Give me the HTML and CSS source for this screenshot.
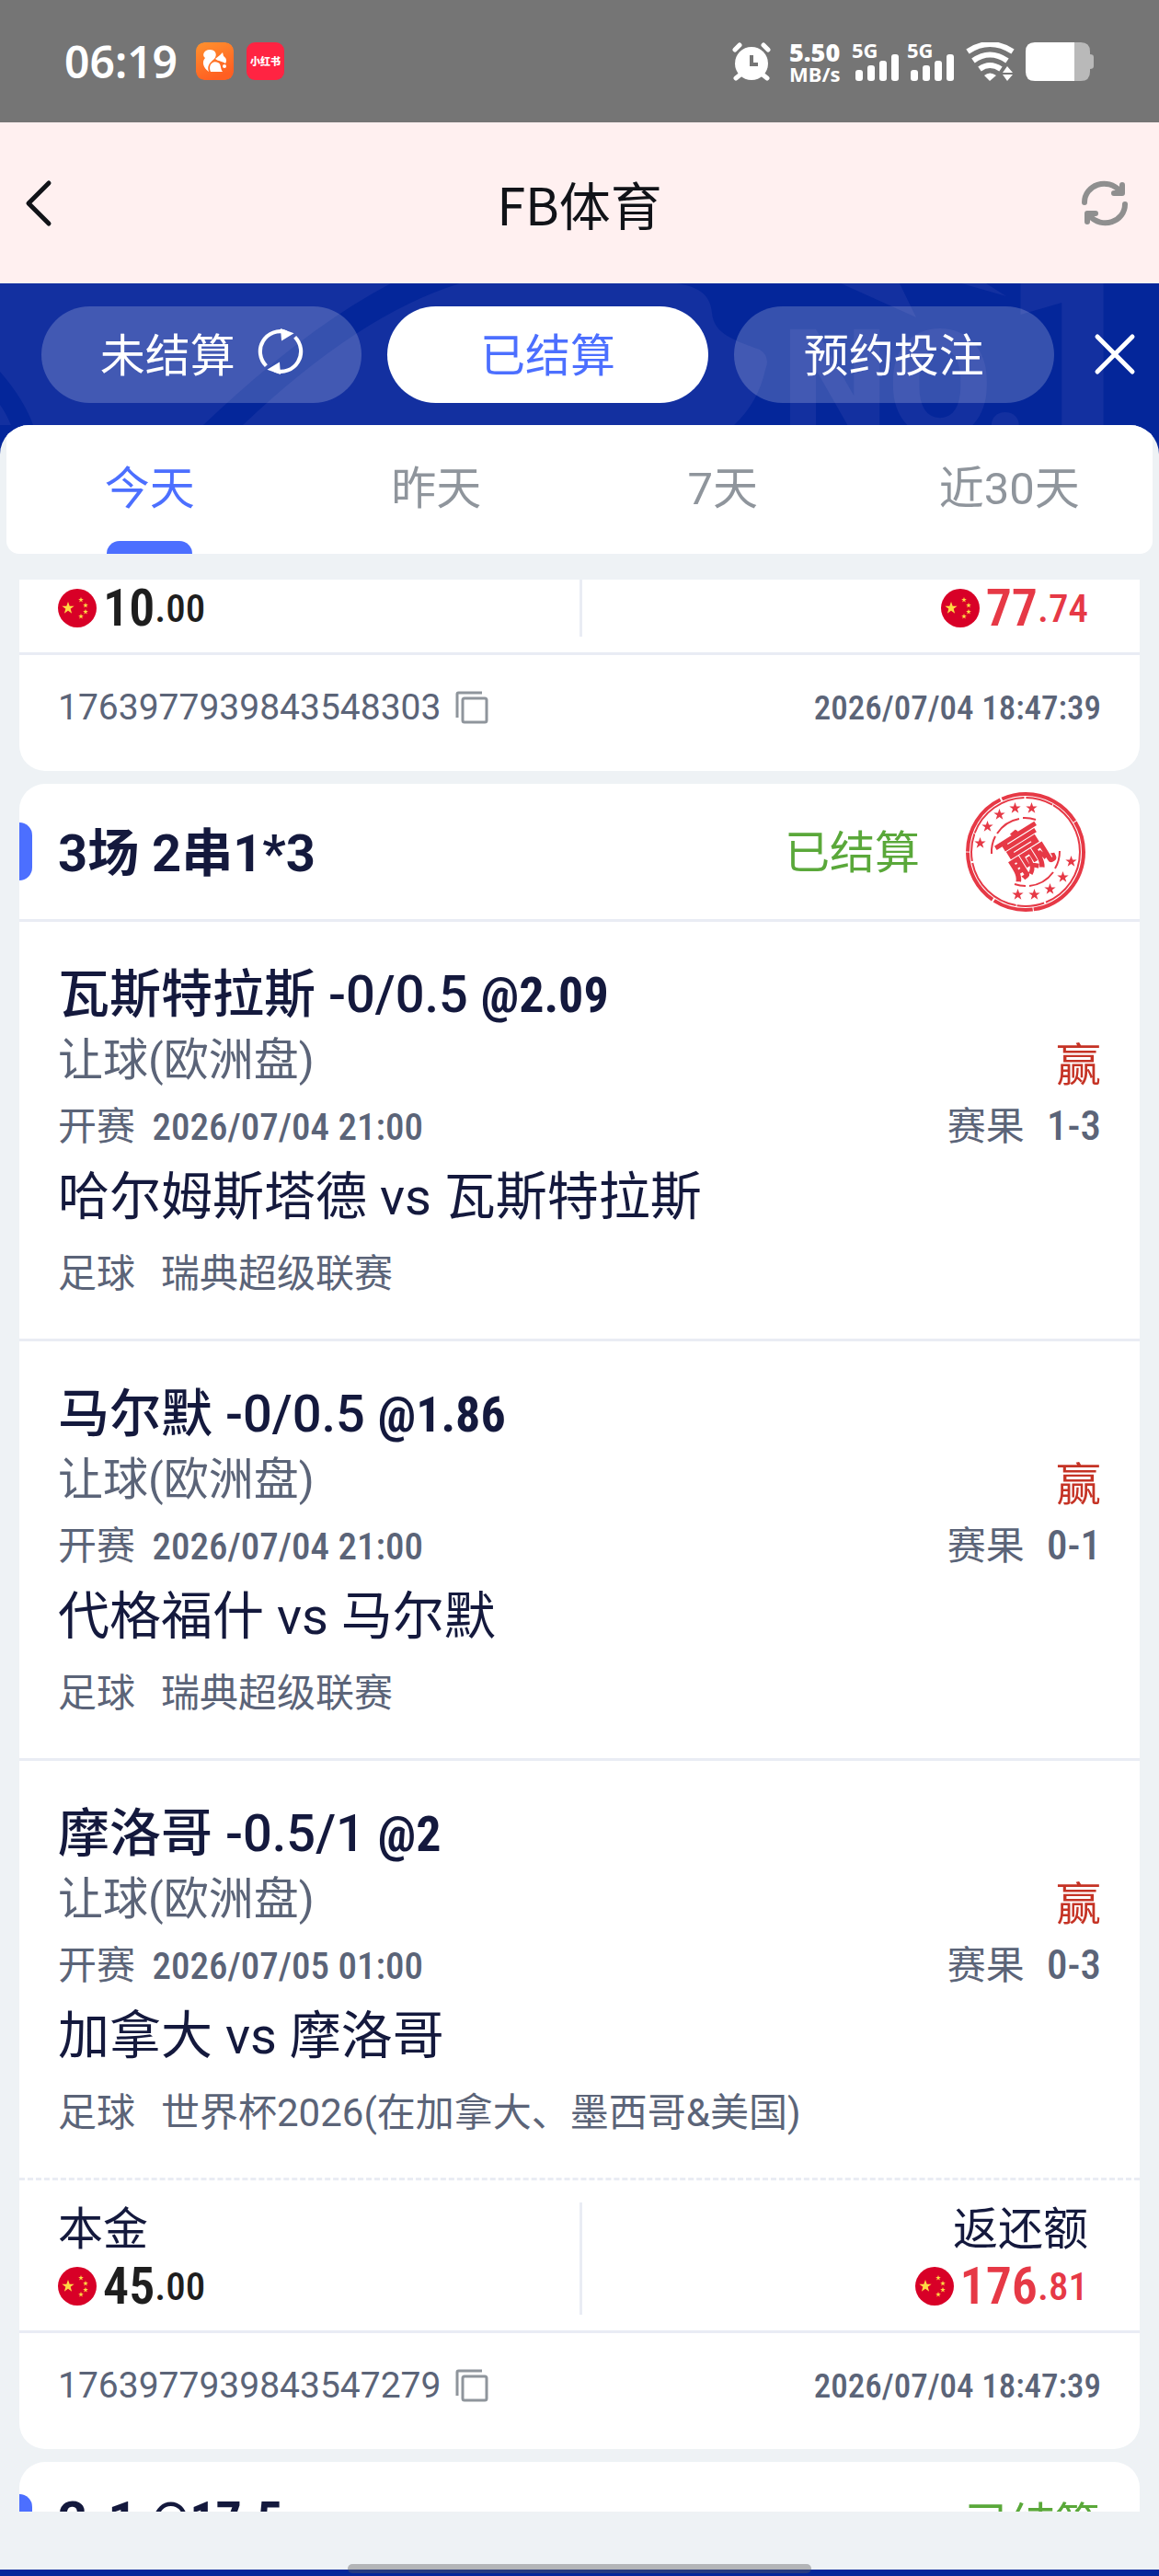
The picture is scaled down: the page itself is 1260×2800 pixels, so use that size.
FILE: index.html
```
<!DOCTYPE html>
<html lang="zh-CN">
<head>
  <meta charset="UTF-8">
  <title>FB体育</title>
  <meta name="viewport" content="width=device-width, initial-scale=1.0">
  <link rel="stylesheet" href="styles.css">
</head>
<body>
  <!-- shared shapes -->
  <svg class="defs" width="0" height="0">
    <symbol id="star" viewBox="-10 -10 20 20">
      <path d="M0-10 2.4-3.2 9.5-3.1 3.8 1.2 5.9 8.1 0 4-5.9 8.1-3.8 1.2-9.5-3.1-2.4-3.2Z"/>
    </symbol>
    <symbol id="flag" viewBox="0 0 42 42">
      <circle cx="21" cy="21" r="21" fill="#d80027"/>
      <g fill="#ffda44">
        <use href="#star" x="4" y="14" width="14" height="14"/>
        <use href="#star" x="22" y="9" width="6" height="6"/>
        <use href="#star" x="27" y="15" width="6" height="6"/>
        <use href="#star" x="27" y="22" width="6" height="6"/>
        <use href="#star" x="22" y="27" width="6" height="6"/>
      </g>
    </symbol>
    <symbol id="copy" viewBox="0 0 36 36">
      <path d="M2 29V3.500Q2 2 3.500 2H29" fill="none" stroke="#8f959c" stroke-width="3"/>
      <rect x="8" y="8" width="26" height="26" rx="2" fill="none" stroke="#8f959c" stroke-width="3"/>
    </symbol>
    <symbol id="signal" viewBox="0 0 48 42">
      <rect x="0" y="30" width="8" height="12" rx="3"/>
      <rect x="13" y="25" width="8" height="17" rx="3"/>
      <rect x="26" y="20" width="8" height="22" rx="3"/>
      <rect x="39" y="13" width="8" height="29" rx="3"/>
    </symbol>
  </svg>

  <div class="status-bar">
    <div class="status-left">
      <span class="clock">06:19</span>
      <svg class="app-icon" viewBox="0 0 41 41">
        <defs>
          <linearGradient id="uc" x1="0" y1="0" x2="0.400" y2="1">
            <stop offset="0" stop-color="#ff922e"/>
            <stop offset="1" stop-color="#ff5f22"/>
          </linearGradient>
        </defs>
        <rect width="41" height="41" rx="9" fill="url(#uc)"/>
        <path d="M14 32C8 28 6 21 10 17 6 14 9 8 15 8 21 8 24 13 20 18 14 23 12 26 14 32Z" fill="#fff"/>
        <path d="M21 18 26 14 29 11 30 15C33 17 34 20 32 23 28 20 25 21 21 18Z" fill="#fff"/>
        <path d="M16 32C13 25 18 19 24 22 28 24 26 28 29 32Z" fill="#fff"/>
        <circle cx="31" cy="26" r="2" fill="#fff"/>
      </svg>
      <span class="app-icon app-red">小红书</span>
    </div>
    <div class="status-right">
      <svg width="42" height="42" viewBox="0 0 42 42">
        <g stroke="#fff" stroke-width="5" stroke-linecap="round">
          <path d="M3 8 8 3M39 8 34 3M9 35 4 39M33 35 38 39"/>
        </g>
        <circle cx="21" cy="23" r="18" fill="#fff"/>
        <path d="M21 14V24H28" fill="none" stroke="#757575" stroke-width="4"/>
      </svg>
      <div class="speed"><b>5.50</b><span>MB/s</span></div>
      <div class="cell"><span>5G</span><svg width="48" height="42"><use href="#signal" fill="#fff"/></svg></div>
      <div class="cell"><span>5G</span><svg width="48" height="42"><use href="#signal" fill="#fff"/></svg></div>
      <svg width="53" height="42" viewBox="0 0 53 42">
        <g fill="none" stroke="#fff" stroke-width="6">
          <path d="M2 10Q26-6 51 10"/>
          <path d="M8 20Q26 7 45 20"/>
          <path d="M15 29Q26 21 38 29"/>
        </g>
        <path d="M20 36Q26 31 33 36L26 42Z" fill="#fff"/>
        <path d="M40 33 45 26 51 33ZM40 35 45 42 51 35Z" fill="#fff"/>
      </svg>
      <svg width="75" height="42" viewBox="0 0 75 42">
        <path d="M52 0H60Q70 0 70 10V13Q74 13 74 16V26Q74 29 70 29V32Q70 42 60 42H52Z" fill="#b9b9b9"/>
        <path d="M53 0H10Q0 0 0 10V32Q0 42 10 42H53Z" fill="#fff"/>
      </svg>
    </div>
  </div>

  <header class="top">
    <button class="icon-btn" aria-label="返回">
      <svg width="32" height="52" viewBox="0 0 32 52" fill="none" stroke="#111318" stroke-width="5" stroke-linecap="round" stroke-linejoin="round"><path d="M27 4 5 26 27 48"/></svg>
    </button>
    <h1>FB体育</h1>
    <button class="icon-btn refresh" aria-label="刷新">
      <svg width="50" height="50" viewBox="0 0 50 50" fill="none" stroke="#8f8f8f" stroke-width="6" stroke-linecap="round" stroke-linejoin="round">
        <path d="M3 24C3 5 28-4 42 12M44 5V14H35"/>
        <path d="M47 26C47 45 22 54 8 38M6 45V36H15"/>
      </svg>
    </button>
  </header>

  <nav class="nav">
    <svg class="nav-bg" viewBox="0 0 1260 154" preserveAspectRatio="xMaxYMin slice">
      <g fill="#1330a0">
        <path d="M0 0H736C760 4 772 12 774 32 776 56 800 62 826 72Q838 80 832 94 824 130 798 154H0Z"/>
        <path d="M914 0H978L996 37ZM1045 0H1072L1094 14Z"/>
        <text class="nav-no" x="850" y="166">NO.</text>
        <text class="nav-one" x="1087" y="166">1</text>
      </g>
      <path d="M425 0H500Q390 34 264 154H221Q330 50 425 0ZM0 96Q26 126 36 154H12Q6 140 0 132Z" fill="#04269a"/>
    </svg>
    <div class="pills">
      <button class="pill">未结算
        <svg width="50" height="50" viewBox="0 0 48 48" fill="none" stroke="#fff" stroke-width="4">
          <path d="M9 39A21 21 0 0 1 30 4M39 9A21 21 0 0 1 18 44"/>
          <path d="M24 0 38 5 25 13ZM24 48 10 43 23 35Z" fill="#fff" stroke="none"/>
        </svg>
      </button>
      <button class="pill active">已结算</button>
      <button class="pill">预约投注</button>
    </div>
    <button class="icon-btn close" aria-label="关闭">
      <svg width="48" height="48" viewBox="0 0 48 48" stroke="#fff" stroke-width="5" stroke-linecap="round"><path d="M5 5 43 43M43 5 5 43"/></svg>
    </button>
  </nav>

  <main class="panel">
    <div class="tabs">
      <button class="tab active">今天</button>
      <button class="tab">昨天</button>
      <button class="tab">7天</button>
      <button class="tab">近30天</button>
    </div>

    <div class="list">
      <section class="card card-cut">
        <div class="stake">
          <div class="stake-col">
            <p class="amount"><svg class="flag"><use href="#flag"/></svg><b>10</b><small>.00</small></p>
          </div>
          <div class="stake-col right">
            <p class="amount win"><svg class="flag"><use href="#flag"/></svg><b>77</b><small>.74</small></p>
          </div>
        </div>
        <div class="order">
          <span class="order-id">1763977939843548303</span>
          <button class="copy" aria-label="复制"><svg width="36" height="36"><use href="#copy"/></svg></button>
          <time class="din">2026/07/04 18:47:39</time>
        </div>
      </section>

      <section class="card">
        <div class="card-head stamped">
          <h2>3场 2串1*3</h2>
          <span class="settled">已结算</span>
          <svg class="stamp" width="130" height="130" viewBox="-65 -65 130 130">
            <g fill="none" stroke="#e63946">
              <circle r="63" stroke-width="4" stroke-dasharray="90 1 44 2 60 1 70 2"/>
              <circle r="59" stroke-width="2" stroke-dasharray="70 2 30 1"/>
              <path d="M-37 2A37 37 0 0 1-33-17M-31-20A37 37 0 0 1-7-36M-3-37A37 37 0 0 1 11-35M37-1A37 37 0 0 1 32 18M30 22A37 37 0 0 1 4 37M0 37A37 37 0 0 1-12 35" stroke-width="2"/>
            </g>
            <g fill="#e63946">
              <use href="#star" x="-56" y="-16" width="13" height="13"/>
              <use href="#star" x="-48" y="-34" width="13" height="13"/>
              <use href="#star" x="-35" y="-47" width="13" height="13"/>
              <use href="#star" x="-18" y="-54" width="13" height="13"/>
              <use href="#star" x="0" y="-54" width="13" height="13"/>
              <use href="#star" x="43" y="4" width="13" height="13"/>
              <use href="#star" x="34" y="21" width="13" height="13"/>
              <use href="#star" x="20" y="34" width="13" height="13"/>
              <use href="#star" x="3" y="40" width="13" height="13"/>
              <use href="#star" x="-15" y="40" width="13" height="13"/>
              <text class="stamp-text" text-anchor="middle" y="20" transform="rotate(-32)">赢</text>
            </g>
          </svg>
        </div>

        <article class="bet">
          <h3>瓦斯特拉斯 -0/0.5 <b>@2.09</b></h3>
          <div class="row market"><span>让球(欧洲盘)</span><em>赢</em></div>
          <div class="row time"><span>开赛 <time class="din">2026/07/04 21:00</time></span><span class="result">赛果 <b class="din">1-3</b></span></div>
          <p class="teams">哈尔姆斯塔德 vs 瓦斯特拉斯</p>
          <p class="league"><span>足球</span><span>瑞典超级联赛</span></p>
        </article>
        <article class="bet">
          <h3>马尔默 -0/0.5 <b>@1.86</b></h3>
          <div class="row market"><span>让球(欧洲盘)</span><em>赢</em></div>
          <div class="row time"><span>开赛 <time class="din">2026/07/04 21:00</time></span><span class="result">赛果 <b class="din">0-1</b></span></div>
          <p class="teams">代格福什 vs 马尔默</p>
          <p class="league"><span>足球</span><span>瑞典超级联赛</span></p>
        </article>
        <article class="bet">
          <h3>摩洛哥 -0.5/1 <b>@2</b></h3>
          <div class="row market"><span>让球(欧洲盘)</span><em>赢</em></div>
          <div class="row time"><span>开赛 <time class="din">2026/07/05 01:00</time></span><span class="result">赛果 <b class="din">0-3</b></span></div>
          <p class="teams">加拿大 vs 摩洛哥</p>
          <p class="league"><span>足球</span><span>世界杯2026(在加拿大、墨西哥&amp;美国)</span></p>
        </article>

        <div class="stake">
          <div class="stake-col">
            <p class="label">本金</p>
            <p class="amount"><svg class="flag"><use href="#flag"/></svg><b>45</b><small>.00</small></p>
          </div>
          <div class="stake-col right">
            <p class="label">返还额</p>
            <p class="amount win"><svg class="flag"><use href="#flag"/></svg><b>176</b><small>.81</small></p>
          </div>
        </div>
        <div class="order">
          <span class="order-id">1763977939843547279</span>
          <button class="copy" aria-label="复制"><svg width="36" height="36"><use href="#copy"/></svg></button>
          <time class="din">2026/07/04 18:47:39</time>
        </div>
      </section>

      <section class="card">
        <div class="card-head">
          <h2>2-1 <b>@17.5</b></h2>
          <span class="settled">已结算</span>
        </div>
      </section>
    </div>
  </main>

  <footer class="home"><span class="home-bar"></span></footer>
</body>
</html>
```
FILE: styles.css
```
* {
  box-sizing: border-box;
}
body {
  display: flex;
  flex-direction: column;
  height: 100vh;
  margin: 0;
  background-color: #04269a;
  font-family: Roboto, "Noto Sans CJK SC", sans-serif;
  color: #14193d;
  overflow: hidden;
}
h1, h2, h3, p {
  margin: 0;
  font-weight: 400;
}
button {
  padding: 0;
  border: none;
  background: none;
  font-family: inherit;
  color: inherit;
  cursor: pointer;
}
svg {
  display: block;
  flex: none;
}
.defs {
  position: absolute;
}
.din {
  font-family: "Roboto Condensed", "Liberation Sans Narrow", Roboto, sans-serif;
  font-weight: 500;
  line-height: 1;
}

/* phone status bar */
.status-bar {
  display: flex;
  flex: none;
  justify-content: space-between;
  align-items: center;
  height: 133px;
  padding: 0 70px;
  background-color: #757575;
  color: #fff;
}
.status-left, .status-right {
  display: flex;
  align-items: center;
}
.status-left {
  gap: 14px;
}
.status-right {
  gap: 12px;
}
.clock {
  margin-right: 6px;
  font-family: "Noto Sans", sans-serif;
  font-size: 48px;
  font-weight: 600;
}
.app-icon {
  width: 41px;
  height: 41px;
  border-radius: 9px;
}
.app-red {
  background-color: #ff2442;
  font-family: "Noto Sans CJK SC", sans-serif;
  font-size: 11px;
  font-weight: 900;
  line-height: 41px;
  text-align: center;
}
.speed {
  display: flex;
  flex-direction: column;
  width: 60px;
  margin-left: 8px;
  font-family: "Noto Sans", sans-serif;
  font-size: 22px;
  font-weight: 700;
  line-height: 20px;
}
.speed b {
  font-size: 27px;
  line-height: 27px;
}
.cell {
  position: relative;
}
.cell span {
  position: absolute;
  top: -3px;
  left: -4px;
  font-family: "Noto Sans", sans-serif;
  font-size: 22px;
  font-weight: 700;
  line-height: 22px;
}

/* page header */
.top {
  display: grid;
  flex: none;
  grid-template-columns: 1fr auto 1fr;
  align-items: center;
  height: 175px;
  padding: 0 26px;
  background-color: #fff0f0;
}
.top h1 {
  font-family: "Noto Sans CJK SC", sans-serif;
  font-size: 56px;
  line-height: 84px;
  color: #111318;
}
.icon-btn {
  justify-self: start;
}
.refresh {
  justify-self: end;
  margin-right: 8px;
}

.nav {
  position: relative;
  display: flex;
  flex: none;
  align-items: center;
  height: 154px;
  padding: 0 24px 0 45px;
}
.nav-bg {
  position: absolute;
  top: 0;
  left: 0;
  width: 100%;
  height: 154px;
}
.nav-no {
  font-size: 164px;
  font-weight: 900;
}
.nav-one {
  font-size: 276px;
  font-weight: 900;
}
.pills {
  position: relative;
  display: flex;
  flex: 1;
  gap: 28px;
}
.pill {
  display: flex;
  flex: 1;
  justify-content: center;
  align-items: center;
  gap: 24px;
  height: 105px;
  padding-bottom: 6px;
  border-radius: 53px;
  background-color: rgba(255, 255, 255, 0.2);
  font-size: 49px;
  color: #fff;
}
.pill.active {
  background-color: #fff;
  color: #4c6fff;
}
.close {
  position: relative;
  margin-left: 42px;
}

/* record list */
.panel {
  display: flex;
  flex: 1;
  flex-direction: column;
  min-height: 0;
  border-radius: 32px 32px 0 0;
  background-color: #eef2f5;
  overflow: hidden;
}
.tabs {
  display: flex;
  flex: none;
  height: 140px;
  margin: 0 7px 28px;
  border-radius: 0 0 14px 14px;
  background-color: #fff;
}
.tab {
  display: flex;
  flex: 1;
  flex-direction: column;
  align-items: center;
  padding-top: 35px;
  font-size: 49px;
  line-height: 70px;
  color: #8f959c;
}
.tab.active {
  color: #4c6fff;
}
.tab.active::after {
  content: "";
  width: 93px;
  height: 14px;
  margin-top: auto;
  border-radius: 14px 14px 0 0;
  background-color: #4c6fff;
}
.list {
  display: flex;
  flex: 1;
  flex-direction: column;
  gap: 14px;
  min-height: 0;
  padding: 0 21px;
  overflow: hidden;
}
.card {
  flex: none;
  border-radius: 28px;
  background-color: #fff;
  overflow: hidden;
}
.card-cut {
  border-radius: 0 0 28px 28px;
}
.card-head {
  display: flex;
  align-items: center;
  height: 133px;
  padding-right: 43px;
}
.card-head.stamped {
  height: 147px;
  padding-right: 59px;
}
.card-head::before {
  content: "";
  width: 14px;
  height: 63px;
  margin-right: 28px;
  border-radius: 0 14px 14px 0;
  background-color: #4c6fff;
}
.card-head h2 {
  flex: 1;
  padding-bottom: 6px;
  font-size: 56px;
  font-weight: 700;
}
.settled {
  padding-bottom: 6px;
  font-size: 49px;
  color: #5aa83a;
}
.stamp {
  margin-left: 50px;
}
.stamp-text {
  font-family: "Noto Sans CJK SC", sans-serif;
  font-size: 54px;
  font-weight: 900;
}

.bet {
  padding: 44px 42px 35px;
  border-top: 3px solid #e9ecf4;
}
.bet h3 {
  font-size: 56px;
  font-weight: 500;
  line-height: 70px;
}
.bet h3 b, .card-head h2 b {
  font-family: "Roboto Condensed", "Liberation Sans Narrow", Roboto, sans-serif;
  font-weight: 700;
  line-height: 1;
}
.bet h3 b {
  font-size: 54px;
}
.row {
  display: flex;
  justify-content: space-between;
  align-items: flex-end;
  line-height: 74px;
  color: #5b6478;
}
.market {
  font-size: 49px;
}
.market em {
  font-style: normal;
  line-height: 62px;
  color: #c53325;
}
.time {
  font-size: 42px;
  line-height: 70px;
}
.time .din {
  margin-left: 8px;
  font-size: 41px;
}
.result .din {
  margin-left: 14px;
  font-size: 45px;
}
.teams {
  font-size: 56px;
  line-height: 82px;
}
.league {
  display: flex;
  gap: 28px;
  margin-top: 8px;
  font-size: 42px;
  line-height: 70px;
  color: #5b6478;
}

.stake {
  display: flex;
  padding: 24px 42px 17px;
  border-top: 3px dashed #e9ecf4;
}
.card-cut .stake {
  padding-top: 0;
  border-top: none;
}
.stake-col {
  flex: 1 1 50%;
}
.stake-col.right {
  padding-right: 14px;
  border-left: 3px solid #e9ecf4;
  text-align: right;
}
.label {
  font-size: 49px;
  line-height: 60px;
}
.amount {
  display: flex;
  align-items: center;
  height: 62px;
  font-family: "Roboto Condensed", "Liberation Sans Narrow", Roboto, sans-serif;
  color: #1e1e1e;
}
.right .amount {
  justify-content: flex-end;
}
.amount.win {
  color: #e63946;
}
.flag {
  width: 42px;
  height: 42px;
  margin-right: 7px;
}
.amount b {
  font-size: 56px;
  font-weight: 600;
}
.amount small {
  font-size: 43px;
  font-weight: 500;
}
.order {
  display: flex;
  align-items: center;
  padding: 29px 42px 41px;
  border-top: 3px solid #e9ecf4;
  font-size: 37px;
  line-height: 56px;
  color: #5b6478;
}
.order-id {
  font-size: 39px;
}
.order time {
  margin-left: auto;
}
.copy {
  margin-left: 16px;
}

/* gesture bar */
.home {
  position: relative;
  display: flex;
  flex: none;
  justify-content: center;
  height: 70px;
  border-bottom: 7px solid #04269a;
  background-color: #eef2f5;
}
.home-bar {
  position: absolute;
  bottom: -4px;
  width: 40%;
  height: 10px;
  border-radius: 5px;
  background-color: rgba(90, 90, 90, 0.4);
}
```
